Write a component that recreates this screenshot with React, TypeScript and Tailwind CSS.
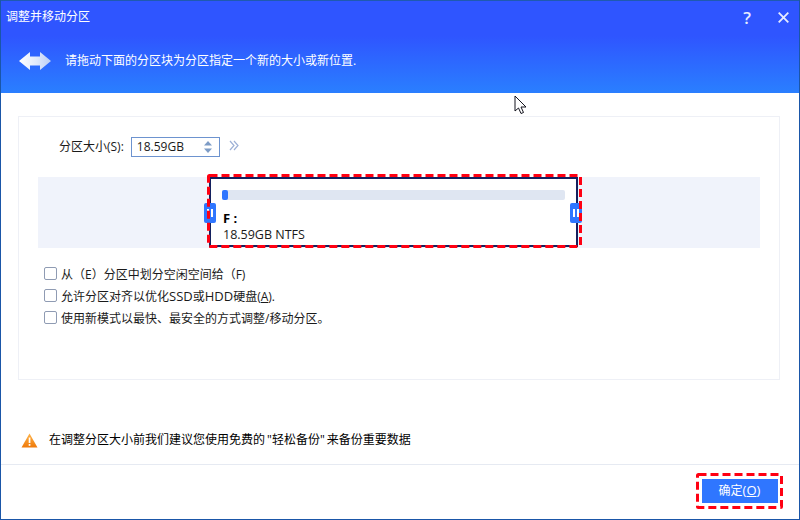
const FONT = "font-['Open_Sans','Noto_Sans_CJK_SC',sans-serif]";

function DashedFrame({ width, height, className = "top-0" }: { width: number; height: number; className?: string }) {
  return (
    <svg className={`pointer-events-none absolute left-0 ${className}`} width={width} height={height}>
      <rect
        x="1.5"
        y="1.5"
        width={width - 3}
        height={height - 3}
        rx="1"
        fill="none"
        stroke="#ff0012"
        strokeWidth="3"
        strokeDasharray="8 4"
      />
    </svg>
  );
}

function Handle({ className }: { className: string }) {
  return (
    <div className={`absolute top-[26px] flex h-5 w-3 items-center justify-center gap-[2px] rounded-[2px] bg-[#2f76ff] ${className}`}>
      <span className="h-2 w-[2px] bg-white" />
      <span className="h-2 w-[2px] bg-white" />
    </div>
  );
}

function Check({ children }: { children: React.ReactNode }) {
  return (
    <label className="flex h-[22px] items-center gap-[4px]">
      <span className="h-[13px] w-[13px] rounded-[2px] border border-[#8f9bb3] bg-white" />
      <span className="pt-[3px]">{children}</span>
    </label>
  );
}

export default function App() {
  return (
    <div className={`relative flex h-[520px] w-[800px] flex-col overflow-hidden border border-t-0 border-[#1a56a8] bg-white text-xs text-[#1a1a1a] ${FONT}`}>
      <header className="flex h-[93px] flex-col border-t border-[#1f5ab0] bg-[linear-gradient(180deg,#2f55ff_0%,#2f55ff_38%,#2a7fff_100%)] text-white">
        <div className="flex h-[32px] items-center justify-between pl-[5px] pr-[10px]">
          <span className="leading-none">调整并移动分区</span>
          <div className="flex items-center gap-[27px]">
            <span className="text-[17px] font-semibold leading-none text-[#e6ecff]">?</span>
            <svg width="11" height="11" viewBox="0 0 11 11">
              <path d="M0.7 0.7l9.6 9.6M10.3 0.7L0.7 10.3" stroke="#e6ecff" strokeWidth="1.8" />
            </svg>
          </div>
        </div>
        <div className="flex items-center gap-[14px] pl-[18px] pt-[19px]">
          <svg width="32" height="18" viewBox="0 0 32 18">
            <defs>
              <linearGradient id="arrow" x1="0" x2="1" y1="0" y2="0">
                <stop offset="0" stopColor="#ffffff" />
                <stop offset="0.55" stopColor="#dfe8fb" />
                <stop offset="1" stopColor="#b9cdf5" />
              </linearGradient>
            </defs>
            <path d="M0 9L11 0V4.5H21V0L32 9L21 18V13.5H11V18z" fill="url(#arrow)" />
          </svg>
          <span className="leading-none">请拖动下面的分区块为分区指定一个新的大小或新位置.</span>
        </div>
      </header>

      <main className="flex flex-1 flex-col">
        <section className="ml-[17px] mr-[19px] mt-[23px] h-[264px] border border-[#eef0f6] px-[19px]">
          <div className="h-[60px] pl-[21px] pt-[20px]">
            <div className="flex h-[20px] items-center">
              <span>分区大小(S):</span>
              <div className="ml-[7px] flex h-[20px] w-[89px] items-center justify-between border border-[#6d93cf] pl-[5px] pr-[7px]">
                <span className="text-xs leading-none">18.59GB</span>
                <svg width="8" height="12" viewBox="0 0 8 12">
                  <path d="M4 0l4 4.5H0z" fill="#7d9cc6" />
                  <path d="M4 12L0 7.5h8z" fill="#7d9cc6" />
                </svg>
              </div>
              <svg className="mb-[3px] ml-[9px]" width="10" height="11" viewBox="0 0 10 11">
                <path d="M1 1l4 4.5L1 10M5 1l4 4.5L5 10" fill="none" stroke="#9db0d6" strokeWidth="1.2" />
              </svg>
            </div>
          </div>

          <div className="flex h-[71px] bg-[#f0f3fb] pl-[169px]">
            <div className="relative h-[71px] w-[375px]">
              <div className="ml-[2px] h-[70px] w-[369px] border-[2px] border-[#14215f] bg-white px-[11px] pt-[11px]">
                <div className="h-[10px] w-full rounded-[2px] bg-[#dfe6f2]">
                  <div className="h-[10px] w-[6px] rounded-[2px] bg-[#2f76ff]" />
                </div>
                <div className="mt-[11px] pl-[1px] text-[13px] font-bold leading-[14px] text-black">F :</div>
                <div className="mt-[2px] pl-[1px] text-[12.5px] leading-[16px]">18.59GB NTFS</div>
              </div>
              <Handle className="left-[-3px]" />
              <Handle className="right-0" />
              <DashedFrame width={375} height={74} className="top-[-3px]" />
            </div>
          </div>

          <div className="mt-[14px] flex flex-col pl-[6px]">
            <Check>从（E）分区中划分空闲空间给（F)</Check>
            <Check>
              允许分区对齐以优化<span className="text-[13px]">SSD</span>或<span className="text-[13px]">HDD</span>硬盘(<span className="underline">A</span>).
            </Check>
            <Check>使用新模式以最快、最安全的方式调整/移动分区。</Check>
          </div>
        </section>

        <div className="flex h-[84px] items-end pb-[16px] pl-[20px]">
          <svg width="17" height="15" viewBox="0 0 17 15">
            <defs>
              <linearGradient id="warn" x1="0" x2="0" y1="0" y2="1">
                <stop offset="0" stopColor="#ffb347" />
                <stop offset="1" stopColor="#ef7a0a" />
              </linearGradient>
            </defs>
            <path d="M8.5 0.5L16.5 14.5H0.5z" fill="url(#warn)" />
            <rect x="7.7" y="4.5" width="1.7" height="5.5" fill="#fff" />
            <rect x="7.7" y="11" width="1.7" height="1.8" fill="#fff" />
          </svg>
          <span className="ml-[11px] leading-[16px] text-black [word-spacing:-1px]">在调整分区大小前我们建议您使用免费的 "轻松备份" 来备份重要数据</span>
        </div>

        <footer className="flex flex-1 items-start justify-end border-t border-[#e6eaf2] pr-[16px] pt-[8px]">
          <div className="relative flex h-[36px] w-[87px] items-center justify-center">
            <button type="button" className="h-[24px] w-[76px] bg-[#2f76ff] text-xs text-white">
              确定<span className="text-[13px]">(<span className="underline">O</span>)</span>
            </button>
            <DashedFrame width={87} height={36} />
          </div>
        </footer>
      </main>

      <svg className="absolute left-[513px] top-[95px]" width="14" height="20" viewBox="0 0 14 20">
        <path d="M1 1v15l3.5-3 2.5 5.5 2.5-1-2.5-5.5h5z" fill="#fff" stroke="#15151f" strokeWidth="1" />
      </svg>
    </div>
  );
}
